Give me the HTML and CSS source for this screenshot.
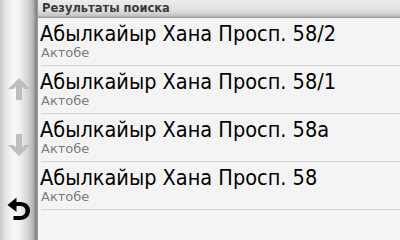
FILE: index.html
```html
<!DOCTYPE html>
<html>
<head>
<meta charset="utf-8">
<link rel="stylesheet" href="styles.css">
</head>
<body>
<div class="screen">
  <div class="sidebar">
    <div class="btn up">
      <svg width="24" height="24" viewBox="0 0 24 24"><path d="M12 1 L23 12 L17.5 12 L15 9.5 L15 23 L9 23 L9 9.5 L6.5 12 L1 12 Z" fill="#bebebe"/></svg>
    </div>
    <div class="btn down">
      <svg width="24" height="24" viewBox="0 0 24 24"><path d="M12 23 L23 12 L17.5 12 L15 14.5 L15 1 L9 1 L9 14.5 L6.5 12 L1 12 Z" fill="#bebebe"/></svg>
    </div>
    <div class="btn back">
      <svg width="24" height="24" viewBox="0 0 24 24"><path d="M0.5 8 L9.5 0.5 L9.5 5 L13 5 C19 5 23 8.5 23 13.5 C23 19 19 23 13 23 L6.5 23 L6.5 19 L13 19 C16.5 19 18.5 16.8 18.5 13.5 C18.5 10.8 16.5 9 13 9 L9.5 9 L9.5 15 Z" fill="#000"/></svg>
    </div>
  </div>
  <div class="main">
    <div class="header">Результаты поиска</div>
    <div class="list">
      <div class="row"><div class="title">Абылкайыр Хана Просп. 58/2</div><div class="sub">Актобе</div></div>
      <div class="row"><div class="title">Абылкайыр Хана Просп. 58/1</div><div class="sub">Актобе</div></div>
      <div class="row"><div class="title">Абылкайыр Хана Просп. 58а</div><div class="sub">Актобе</div></div>
      <div class="row"><div class="title">Абылкайыр Хана Просп. 58</div><div class="sub">Актобе</div></div>
    </div>
  </div>
</div>
</body>
</html>
```
FILE: styles.css
```css
html, body { margin: 0; padding: 0; }
body { width: 400px; height: 240px; overflow: hidden; font-family: "DejaVu Sans", sans-serif; background: #f4f4f4; }
.screen { display: flex; width: 400px; height: 240px; }
.sidebar {
  width: 38px; flex: none; position: relative;
  background: linear-gradient(to right, #c8c8c8 0px, #e6e6e6 6px, #fafafa 14px, #f0f0f0 20px, #d2d2d2 28px, #b4b4b4 33px, #9a9a9a 35px, #7a7a7a 36px, #8c8c8c 37px, #b0b0b0 38px);
}
.btn { position: absolute; left: 0; width: 38px; display: flex; justify-content: center; }
.btn.up { top: 77px; }
.btn.down { top: 133px; }
.btn.back { top: 197px; }
.main { flex: 1; display: flex; flex-direction: column; }
.header {
  height: 17px; line-height: 16px; padding-left: 4px;
  font-size: 11.5px; font-weight: bold; color: #3a3a3a;
  background: linear-gradient(to bottom, #ececec 0%, #e0e0e0 60%, #c8c8c8 90%, #a8a8a8 100%);
  border-bottom: 1px solid #9a9a9a;
}
.row { height: 47px; border-bottom: 1px solid #d4d4d4; margin-left: 3px; }
.title { font-size: 21.5px; font-stretch: semi-condensed; line-height: 24px; padding-top: 4px; margin-left: -1px; color: #000; white-space: nowrap; }
.sub { font-size: 13px; line-height: 14px; color: #7a7a7a; }
```
